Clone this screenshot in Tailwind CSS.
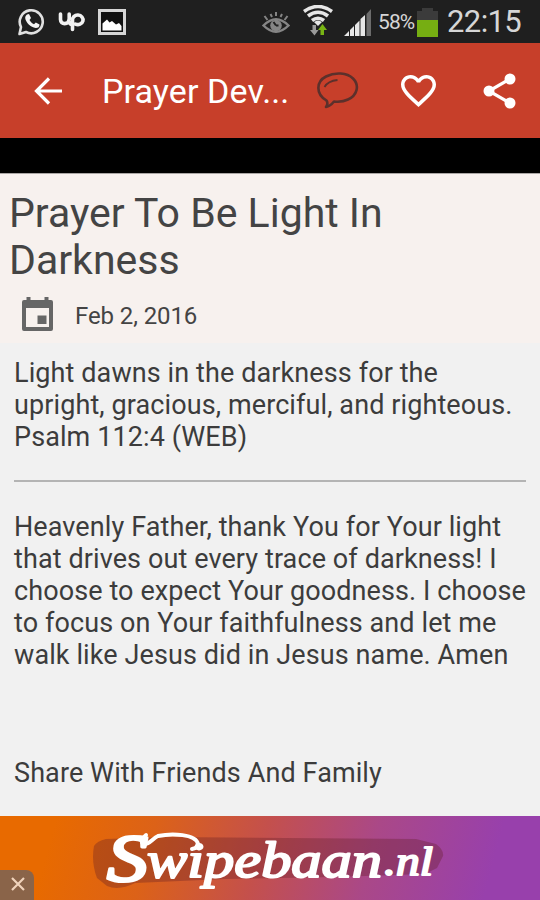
<!DOCTYPE html>
<html lang="en">
<head>
    <meta charset="UTF-8">
    <meta name="viewport" content="width=device-width, initial-scale=1.0">
    <title>Prayer Devotional</title>
    <script src="https://cdn.jsdelivr.net/npm/@tailwindcss/browser@4"></script>
</head>
<body class="w-[540px] h-[900px] flex flex-col overflow-hidden bg-[#f1f1f1] font-['Roboto',sans-serif]">
    <!-- Status bar -->
    <div class="h-[43px] shrink-0 bg-[#1f1f1f] flex items-center pl-[17px] pr-[18px] text-[#d6d6d6]">
        <svg class="w-[29px] h-[29px]" viewBox="0 0 29 29" fill="none">
            <path d="M2.500 27l1.500-7A11.500 11.500 0 1 1 9 25z" stroke="#e0e0e0" stroke-width="2.600" stroke-linejoin="round"/>
            <path d="M10 7.500l2-.4 2 3.900-1.500 2c1 2 2.500 3.300 4.500 4.200l1.800-1.700 3.700 1.900c.2 2.300-1.500 3.700-3.800 3.600-5-.5-10-5.600-10.500-10 0-1.500.7-2.700 1.800-3.500z" fill="#f4f4f4"/>
        </svg>
        <svg class="w-[28px] h-[21px] ml-[12px]" viewBox="0 0 28 21" fill="none" stroke="#f2f2f2" stroke-width="3.600" stroke-linecap="round">
            <path d="M2.500 3v5.500c0 5.500 8 5.500 8.700 0V3M11 8c0 4 1 6 3.500 5.500"/>
            <path d="M14.500 18.500V9.500a5.300 4.800 0 1 1 3 3.700"/>
        </svg>
        <svg class="w-[28px] h-[26px] ml-[12px]" viewBox="0 0 28 26">
            <path d="M1.500 1.500h25v23h-25z" fill="#111" stroke="#d6d6d6" stroke-width="3"/>
            <path d="M4.500 21.500v-7L9 10.500l2.500 3 2.500-1.500 4 3.500 3-1.500 2.500 3v4.500z" fill="#fff"/>
        </svg>
        <div class="grow"></div>
        <svg class="w-[28px] h-[22px] mt-0.5" viewBox="0 0 28 22" fill="none" stroke="#858585">
            <path d="M1.500 13.500Q14 1 26.500 13.500Q14 26 1.500 13.500z" stroke-width="2.400"/>
            <circle cx="14" cy="13.500" r="5.800" fill="#858585" stroke="none"/>
            <path d="M14 13.500l-2.500-3.500M14 13.500h2.500" stroke="#1f1f1f" stroke-width="2"/>
            <path d="M2.500 4l3 4M8.500 2l1.500 3M14 0v4M20 2l-1.500 3M25.500 4l-3 4" stroke-width="2"/>
        </svg>
        <svg class="w-[30px] h-[31px] ml-[13px] -mt-0.5" viewBox="0 0 30 31" fill="none">
            <path d="M1 6.500Q15-3.500 29 6.500M5 11Q15 3.500 25 11M9 15.500Q15 11 21 15.500" stroke="#e6e6e6" stroke-width="3.600"/>
            <path d="M11 17Q15 14 19 17L15 21z" fill="#e6e6e6"/>
            <path d="M9.500 20h3.500v5h2.500l-4 5.500-4.500-5.500h2.500z" fill="#9a9a9a"/>
            <path d="M17.500 30h3.500v-5h3l-4.500-6-4.500 6h2.500z" fill="#78b414"/>
        </svg>
        <svg class="w-[28px] h-[27px] ml-[11px] mt-0.5" viewBox="0 0 28 27">
            <path d="M0 27l5-5v5zM6 27v-6l4-4v10zM11 27V16l4.500-4.500V27zM16.500 27v-17l4.500-4v21z" fill="#e6e6e6"/>
            <path d="M22.500 27V5L27 0v27z" fill="#6c6c6c"/>
        </svg>
        <span class="ml-[6px] w-[37px] text-[21px] tracking-[-0.9px] whitespace-nowrap mt-0.5">58%</span>
        <svg class="w-[21px] h-[29px] ml-[2px] mt-0.5" viewBox="0 0 21 29">
            <path d="M0 3h5V0h11v3h5v9H0z" fill="#3b3b3b"/>
            <path d="M0 12h21v17H0z" fill="#76ae12"/>
        </svg>
        <span class="ml-[9px] w-[75px] text-[31px] tracking-[-0.6px] leading-none whitespace-nowrap">22:15</span>
    </div>

    <!-- App bar -->
    <div class="h-[95px] shrink-0 bg-[#c73f2a] flex items-center pl-[34px] pr-[24px] text-white">
        <svg class="w-[28px] h-[28px]" viewBox="0 0 28 28" fill="none" stroke="#fff" stroke-width="3.200">
            <path d="M28 14H2.500M15 1.500L2.500 14 15 26.500"/>
        </svg>
        <h1 class="ml-[40px] w-[190px] text-[34px] leading-none tracking-[0.1px] whitespace-nowrap">Prayer Dev...</h1>
        <svg class="w-[42px] h-[38px] ml-[25px]" viewBox="0 0 42 38" fill="none" stroke="#5c302b" stroke-width="2.600" stroke-linejoin="round">
            <path d="M9.500 28.500C-1.500 22-1 9.500 9 4.500 18 0 30 .5 36 6.500c7 7 4 17-5 21-4 2-9 2.500-14 2-2 2.500-5 5-8 5.500 1.500-2 2-4 .5-6.500z"/>
            <path d="M7.500 15q3.500-6 13-7" stroke-width="1.800"/>
        </svg>
        <svg class="w-[35px] h-[32px] ml-[42px]" viewBox="2 3 20 18.350" preserveAspectRatio="none" fill="#fff">
            <path d="M16.500 3c-1.740 0-3.410.81-4.500 2.090C10.910 3.810 9.240 3 7.500 3 4.420 3 2 5.420 2 8.500c0 3.780 3.400 6.860 8.550 11.540L12 21.350l1.450-1.320C18.600 15.360 22 12.280 22 8.500 22 5.420 19.580 3 16.500 3zm-4.400 15.550l-.1.100-.1-.1C7.140 14.240 4 11.390 4 8.500 4 6.500 5.500 5 7.500 5c1.540 0 3.040.99 3.570 2.360h1.870C13.460 5.990 14.960 5 16.500 5c2 0 3.500 1.500 3.500 3.500 0 2.890-3.140 5.740-7.900 10.050z"/>
        </svg>
        <svg class="w-[33px] h-[36px] ml-auto" viewBox="0 0 33 36" fill="#fff">
            <path d="M27 6L6 18l21 12" fill="none" stroke="#fff" stroke-width="3.200"/>
            <circle cx="27" cy="6" r="5.500"/>
            <circle cx="6" cy="18" r="5.500"/>
            <circle cx="27" cy="30" r="5.500"/>
        </svg>
    </div>

    <div class="h-[35px] shrink-0 bg-black"></div>

    <!-- Title and date -->
    <div class="h-[170px] shrink-0 bg-[#f7f1ee] border-t border-[#aaa6a4] pt-[16px] pl-[9px] text-[#444]">
        <h2 class="text-[41px] leading-[47px] tracking-[0px] whitespace-nowrap">Prayer To Be Light In<br>Darkness</h2>
        <div class="flex items-center h-[34px] mt-[13px] pl-[13px]">
            <svg class="w-[31px] h-[34px]" viewBox="0 0 31 34" fill="#666">
                <path fill-rule="evenodd" d="M4.500 0h4v3h14V0h4v3H29q2 0 2 2v27q0 2-2 2H2q-2 0-2-2V5q0-2 2-2h2.500zM4 11v19h23V11z"/>
                <path d="M15.500 18.500h9v8.500h-9z"/>
            </svg>
            <span class="ml-[22px] mt-[3px] text-[24px] tracking-[-0.1px]">Feb 2, 2016</span>
        </div>
    </div>

    <!-- Prayer text -->
    <div class="h-[473px] shrink-0 pt-[14px] px-[14px] text-[27px] leading-[32px] tracking-[0.1px] text-[#3c3c3c] whitespace-nowrap">
        <p>Light dawns in the darkness for the<br>upright, gracious, merciful, and righteous.<br>Psalm 112:4 (WEB)</p>
        <hr class="mt-[27px] border-t-2 border-[#b4b4b4]">
        <p class="mt-[29px]">Heavenly Father, thank You for Your light<br>that drives out every trace of darkness! I<br>choose to expect Your goodness. I choose<br>to focus on Your faithfulness and let me<br>walk like Jesus did in Jesus name. Amen</p>
        <p class="mt-[86px]">Share With Friends And Family</p>
    </div>

    <!-- Ad banner -->
    <div class="relative h-[84px] shrink-0 bg-linear-[105deg,#e86a00_10%,#dc6218_28%,#c4504c_48%,#aa4888_68%,#9840ac_90%]">
        <svg class="w-[540px] h-[84px]" viewBox="0 0 540 84">
            <path d="M94 30q3-5 12-7l60-2 120 1 130 1 20 5q8 6 7 12l-6 12-12 6-90 3-110 2-90 4q-16 8-28 3l-10-8q-6-16-3-32z" fill="#641c26" fill-opacity=".34"/>
            <g fill="#fff" stroke="#fff" font-family="Liberation Serif, serif" font-style="italic">
                <text x="107" y="65" font-size="68" textLength="41" lengthAdjust="spacingAndGlyphs" stroke-width="3" stroke-linejoin="round">S</text>
                <text x="147" y="61" font-size="50" textLength="235" lengthAdjust="spacingAndGlyphs" stroke-width="2" stroke-linejoin="round">wipebaan</text>
                <text x="384" y="59" font-size="39" textLength="49" lengthAdjust="spacingAndGlyphs" stroke-width="1.800" stroke-linejoin="round">.nl</text>
            </g>
            <!-- flourish from the top of the S over the next letters -->
            <path d="M146 19c-4 3-6 8-2 9 5 1 9-6 14-8 14-3 38-2 40 8q0 4-6 5" fill="none" stroke="#fff" stroke-width="4" stroke-linecap="round"/>
        </svg>
        <div class="absolute left-0 bottom-0 w-[34px] h-[30px] rounded-tr-lg bg-[#8a6449] flex items-center justify-center">
            <svg class="w-[14px] h-[14px] ml-0.5 -mt-0.5" viewBox="0 0 14 14" stroke="#f0d3bb" stroke-width="2.200">
                <path d="M1 1l12 12M13 1L1 13"/>
            </svg>
        </div>
    </div>
</body>
</html>
